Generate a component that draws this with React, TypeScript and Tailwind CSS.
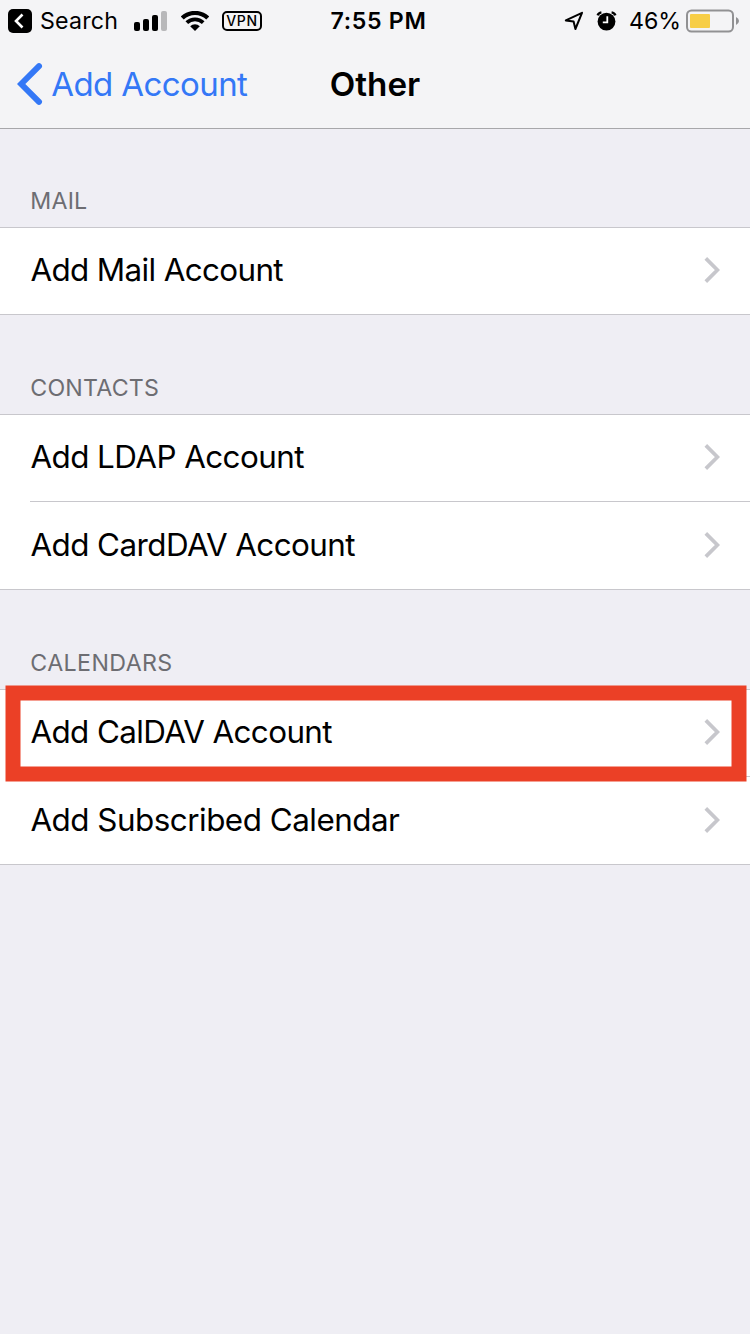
import type { ReactNode } from "react";

function Chevron() {
  return (
    <svg className="h-[26px] w-[16px] shrink-0" viewBox="0 0 16 26" fill="none">
      <path d="M1.8 1.4 L13.4 13 L1.8 24.6" stroke="#c7c7cc" strokeWidth="3.7" />
    </svg>
  );
}

function Row({ label, tracking, first }: { label: string; tracking: string; first?: boolean }) {
  return (
    <div className="pl-[30px]">
      <div
        className={`flex items-center justify-between pr-[30px] ${
          first ? "h-[86px] pb-[2px]" : "h-[88px] border-t border-[#c8c7cc] pb-[1px]"
        }`}
      >
        <span className={`pl-[0.4px] text-[31.4px] leading-[40px] whitespace-nowrap ${tracking}`}>{label}</span>
        <Chevron />
      </div>
    </div>
  );
}

function Section({ title, tracking, children }: { title: string; tracking: string; children: ReactNode }) {
  return (
    <section>
      <h2 className={`flex h-[99px] items-end pb-[10px] pl-[30.3px] text-[23.2px] leading-[32px] text-[#6d6d72] ${tracking}`}>
        {title}
      </h2>
      <div className="border-y border-[#c8c7cc] bg-white">{children}</div>
    </section>
  );
}

function StatusBar() {
  return (
    <div className="grid h-[41px] grid-cols-[1fr_auto_1fr] items-center text-[23.2px] leading-[30px]">
      <div className="flex items-center pl-[8px]">
        <svg className="h-[24px] w-[24px]" viewBox="0 0 24 24" fill="none">
          <rect width="24" height="24" rx="5" fill="#000" />
          <path d="M14.5 5.5 L8 12 L14.5 18.5" stroke="#fff" strokeWidth="2.6" />
        </svg>
        <span className="ml-[8px] w-[94px] whitespace-nowrap tracking-[0.2px]">Search</span>
        <svg className="h-[20px] w-[33px]" viewBox="0 0 33 20">
          <rect x="0" y="11" width="6" height="9" rx="2" />
          <rect x="9" y="8" width="6" height="12" rx="2" />
          <rect x="18" y="4" width="6" height="16" rx="2" />
          <rect x="27" y="0" width="6" height="20" rx="2" fill="#b8b8ba" />
        </svg>
        <svg className="ml-[14px] h-[20px] w-[28px]" viewBox="0 0 28 20" fill="none" stroke="#000">
          <path d="M1.3 7 A18.4 18.4 0 0 1 26.7 7" strokeWidth="4.2" />
          <path d="M5.8 11.6 A11.8 11.8 0 0 1 22.2 11.6" strokeWidth="3.8" />
          <path d="M14 20 L9.2 15.2 A6.8 6.8 0 0 1 18.8 15.2 Z" fill="#000" stroke="none" />
        </svg>
        <span className="ml-[13px] flex h-[20px] w-[40px] items-center justify-center rounded-[5px] border-2 border-black text-[14px] font-medium leading-none tracking-[0.6px]">
          VPN
        </span>
      </div>
      <span className="ml-[7px] font-semibold tracking-[0.7px]">7:55 PM</span>
      <div className="flex items-center justify-end pr-[11px]">
        <svg className="h-[20px] w-[20px]" viewBox="0 0 20 20" fill="none" stroke="#000" strokeWidth="2" strokeLinejoin="round">
          <path d="M18 1.8 L1.8 9.4 L9.6 10.6 L11.4 18 Z" />
        </svg>
        <svg className="ml-[12px] h-[20px] w-[21px]" viewBox="0 0 21 20" fill="none">
          <circle cx="10.5" cy="10.6" r="8.9" fill="#000" />
          <path d="M1.6 4.4 Q2.6 1.8 5.4 1.4 M19.4 4.4 Q18.4 1.8 15.6 1.4" stroke="#000" strokeWidth="2.4" />
          <path d="M11.3 5.2 V11.4 H6.8" stroke="#fff" strokeWidth="1.8" />
        </svg>
        <span className="ml-[12px] w-[57px] whitespace-nowrap">46%</span>
        <svg className="h-[24px] w-[53px]" viewBox="0 0 53 24">
          <rect x="1" y="1.5" width="46" height="21" rx="4.5" fill="none" stroke="#919193" strokeWidth="2" />
          <rect x="4" y="5" width="20" height="14" rx="1" fill="#f7ce46" />
          <path d="M50 8 Q53 9.5 53 12 Q53 14.5 50 16 Z" fill="#919193" />
        </svg>
      </div>
    </div>
  );
}

export default function App() {
  return (
    <main className="h-[1334px] w-[750px] overflow-hidden bg-[#efeef4] font-['Inter','Liberation_Sans',sans-serif] text-black">
      <header className="h-[129px] border-b border-[#a7a7aa] bg-[#f4f4f6]">
        <StatusBar />
        <div className="grid h-[86px] grid-cols-[1fr_auto_1fr] items-center">
          <a className="flex items-center pl-[17px] text-[#3478f6]">
            <svg className="h-[42px] w-[26px]" viewBox="0 0 26 42" fill="none">
              <path d="M22 3.2 L4.2 21 L22 38.8" stroke="#3478f6" strokeWidth="6" strokeLinecap="round" />
            </svg>
            <span className="ml-[8.3px] text-[33px] leading-[40px] tracking-[-0.6px] whitespace-nowrap">Add Account</span>
          </a>
          <h1 className="text-[33.2px] leading-[40px] font-semibold">Other</h1>
        </div>
      </header>
      <div className="-mt-px flex flex-col">
        <Section title="MAIL" tracking="tracking-[0.2px]">
          <Row first label="Add Mail Account" tracking="tracking-[-0.63px]" />
        </Section>
        <Section title="CONTACTS" tracking="tracking-[0.2px]">
          <Row first label="Add LDAP Account" tracking="tracking-[-0.56px]" />
          <Row label="Add CardDAV Account" tracking="tracking-[-0.56px]" />
        </Section>
        <Section title="CALENDARS" tracking="tracking-[0.4px]">
          <div className="relative">
            <Row first label="Add CalDAV Account" tracking="tracking-[-0.6px]" />
            <svg className="absolute -top-[5px] left-[5px] h-[97px] w-[742px]" viewBox="0 0 742 97" fill="none">
              <rect x="8" y="8" width="726" height="81" stroke="#eb4026" strokeWidth="15" />
            </svg>
          </div>
          <Row label="Add Subscribed Calendar" tracking="tracking-[-0.5px]" />
        </Section>
      </div>
    </main>
  );
}
